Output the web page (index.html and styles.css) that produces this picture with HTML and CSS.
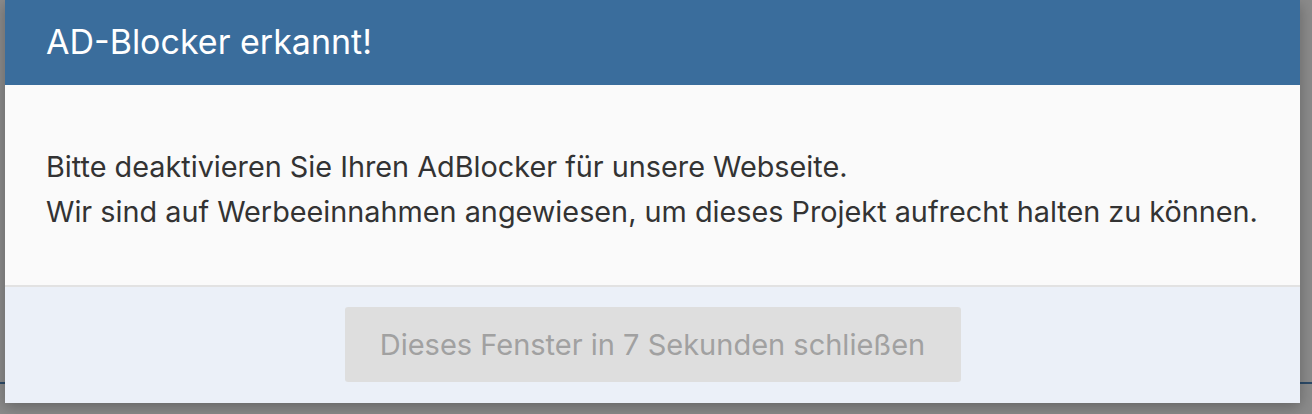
FILE: index.html
```html
<!DOCTYPE html>
<html lang="de">
<head>
    <meta charset="UTF-8">
    <meta name="viewport" content="width=device-width, initial-scale=1.0">
    <title>AD-Blocker erkannt</title>
    <link rel="stylesheet" href="styles.css">
</head>
<body>
    <div class="page">
        <div class="page-bar"></div>
    </div>

    <div class="modal">
        <div class="modal-header">
            <h2 class="modal-title">AD-Blocker erkannt!</h2>
        </div>
        <div class="modal-body">
            <p>Bitte deaktivieren Sie Ihren AdBlocker für unsere Webseite.<br>
            Wir sind auf Werbeeinnahmen angewiesen, um dieses Projekt aufrecht halten zu können.</p>
        </div>
        <div class="modal-footer">
            <button class="close-btn" disabled>Dieses Fenster in 7 Sekunden schließen</button>
        </div>
    </div>
</body>
</html>
```

FILE: styles.css
```css
* {
    box-sizing: border-box;
    font-family: Inter, 'Noto Sans', sans-serif;
}
body {
    margin: 0;
    width: 1312px;
    height: 414px;
    overflow: hidden;
    background-color: #8b8b8b;
}
.page {
    height: 414px;
}
.page-bar {
    height: 384px;
    border-bottom: 2px solid #2c4a68;
}
.modal {
    position: absolute;
    top: 0;
    left: 5px;
    width: 1295px;
    height: 403px;
    display: flex;
    flex-direction: column;
    box-shadow: 0 4px 14px rgba(0, 0, 0, 0.28);
}
.modal-header {
    height: 85px;
    background-color: #3a6d9c;
    display: flex;
    align-items: center;
    padding-left: 41px;
}
.modal-title {
    margin: 0;
    color: #fff;
    font-size: 34px;
    font-weight: 400;
    padding-bottom: 2px;
}
.modal-body {
    height: 202px;
    background-color: #fafafa;
    border-bottom: 2px solid #e2e2e2;
    display: flex;
    align-items: center;
    padding-left: 41px;
    padding-top: 8px;
}
.modal-body p {
    margin: 0;
    color: #333;
    font-size: 28.8px;
    line-height: 45px;
}
.modal-footer {
    flex: 1;
    background-color: #ebf0f8;
    display: flex;
    justify-content: center;
    padding-top: 20px;
}
.close-btn {
    width: 616px;
    height: 75px;
    border: none;
    border-radius: 3px;
    background-color: #dedede;
    color: #a1a1a1;
    font-size: 29px;
}
```
